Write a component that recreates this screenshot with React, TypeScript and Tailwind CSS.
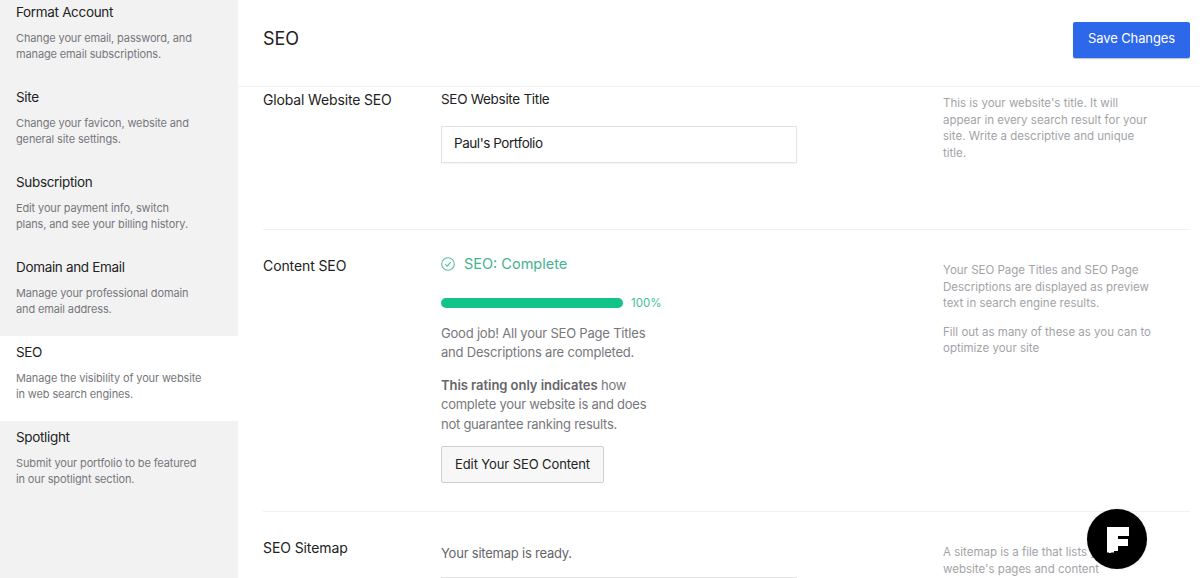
import React from 'react';

const navItems = [
  { title: 'Format Account', lines: ['Change your email, password, and', 'manage email subscriptions.'] },
  { title: 'Site', lines: ['Change your favicon, website and', 'general site settings.'] },
  { title: 'Subscription', lines: ['Edit your payment info, switch', 'plans, and see your billing history.'] },
  { title: 'Domain and Email', lines: ['Manage your professional domain', 'and email address.'] },
  { title: 'SEO', lines: ['Manage the visibility of your website', 'in web search engines.'], active: true },
  { title: 'Spotlight', lines: ['Submit your portfolio to be featured', 'in our spotlight section.'] },
];

const App: React.FC = () => {
  return (
    <div className="relative flex h-[578px] w-[1200px] overflow-hidden bg-white font-['Inter',sans-serif] text-[#222]">
      {/* Sidebar */}
      <aside className="w-[238px] shrink-0 bg-[#f2f2f3]">
        <div className="-mt-[4px]">
          {navItems.map((item) => (
            <div key={item.title} className={`h-[85px] pl-4 pt-[7px] ${item.active ? 'bg-white' : ''}`}>
              <h3 className="text-[13.5px] leading-[18px] tracking-[-0.33px] text-[#222]">{item.title}</h3>
              <p className="mt-[9px] text-[11px] leading-[16.4px] tracking-[-0.13px] text-[#77777c]">
                {item.lines.map((line) => (
                  <span key={line} className="block whitespace-nowrap">{line}</span>
                ))}
              </p>
            </div>
          ))}
        </div>
      </aside>

      {/* Main */}
      <main className="flex-1">
        <header className="flex h-[87px] items-start justify-between border-b border-[#f3f3f3] pl-[25px] pr-[10px]">
          <h1 className="mt-[27px] text-[18px] leading-6 text-[#222]">SEO</h1>
          <button className="mt-[22px] h-[36px] w-[117px] rounded-[2px] bg-[#2d67ea] pb-[2px] text-[13px] tracking-[-0.1px] text-white shadow-[0_1px_1px_rgba(0,0,0,0.25)]">
            Save Changes
          </button>
        </header>

        <div className="ml-[25px] mr-[10px]">
          {/* Global Website SEO */}
          <section className="flex h-[143px] border-b border-[#f0f0f0]">
            <h2 className="mt-[4px] w-[178px] text-[14px] leading-[18px] tracking-[-0.15px]">Global Website SEO</h2>
            <div className="w-[502px] pt-[3px]">
              <label className="block text-[13.5px] leading-[18px] tracking-[-0.3px]">SEO Website Title</label>
              <div className="mt-[18px] flex h-[37px] w-[356px] items-center border border-[#e3e3e3] pb-[2px] pl-3 text-[13.5px] tracking-[-0.45px] shadow-[0_1px_1px_rgba(0,0,0,0.04)]">
                Paul's Portfolio
              </div>
            </div>
            <p className="mt-[8px] w-[220px] text-[11.5px] leading-[16.6px] text-[#a3a3a7]">
              <span className="block whitespace-nowrap">This is your website's title. It will</span>
              <span className="block whitespace-nowrap">appear in every search result for your</span>
              <span className="block whitespace-nowrap">site. Write a descriptive and unique</span>
              <span className="block whitespace-nowrap">title.</span>
            </p>
          </section>

          {/* Content SEO */}
          <section className="flex h-[282px] border-b border-[#f0f0f0]">
            <h2 className="mt-[27px] w-[178px] text-[14px] leading-[18px] tracking-[-0.1px]">Content SEO</h2>
            <div className="w-[502px] pt-[25px]">
              <div className="flex items-center gap-[9px]">
                <svg width="14" height="14" viewBox="0 0 14 14" fill="none" stroke="#5cbf9b" strokeWidth="1.1">
                  <circle cx="7" cy="7" r="6.3" />
                  <path d="M4.2 7.2l2 2 3.6-4" />
                </svg>
                <span className="text-[14.5px] leading-[18px] text-[#45b48e]">SEO: Complete</span>
              </div>
              <div className="mt-[23px] flex items-center gap-2">
                <div className="h-[10px] w-[182px] rounded-full bg-[#12c488]" />
                <span className="text-[11.5px] leading-[14px] text-[#3fbf94]">100%</span>
              </div>
              <p className="mt-[14px] text-[13px] leading-[19.4px] tracking-[-0.2px] text-[#77777c]">
                <span className="block whitespace-nowrap">Good job! All your SEO Page Titles</span>
                <span className="block whitespace-nowrap">and Descriptions are completed.</span>
              </p>
              <p className="mt-[13px] text-[13px] leading-[19.4px] tracking-[-0.25px] text-[#77777c]">
                <span className="block whitespace-nowrap"><span className="font-semibold tracking-[-0.05px] text-[#66666a]">This rating only indicates</span> how</span>
                <span className="block whitespace-nowrap">complete your website is and does</span>
                <span className="block whitespace-nowrap">not guarantee ranking results.</span>
              </p>
              <button className="mt-[12px] h-[37px] w-[163px] rounded-[2px] border border-[#cfcfcf] bg-[#f7f7f7] text-[13px] tracking-[-0.1px] text-[#222]">
                Edit Your SEO Content
              </button>
            </div>
            <div className="mt-[32px] w-[220px] text-[11.5px] leading-[16.6px] text-[#a3a3a7]">
              <p>
                <span className="block whitespace-nowrap">Your SEO Page Titles and SEO Page</span>
                <span className="block whitespace-nowrap">Descriptions are displayed as preview</span>
                <span className="block whitespace-nowrap">text in search engine results.</span>
              </p>
              <p className="mt-[12px]">
                <span className="block whitespace-nowrap">Fill out as many of these as you can to</span>
                <span className="block whitespace-nowrap">optimize your site</span>
              </p>
            </div>
          </section>

          {/* SEO Sitemap */}
          <section className="flex h-[70px]">
            <h2 className="mt-[27px] w-[178px] text-[14px] leading-[18px] tracking-[-0.1px]">SEO Sitemap</h2>
            <div className="w-[502px] pt-[32px]">
              <p className="text-[13px] leading-[18px] tracking-[-0.22px] text-[#66666a]">Your sitemap is ready.</p>
              <div className="mt-[15px] h-[37px] w-[356px] border border-[#e3e3e3]" />
            </div>
            <p className="mt-[32px] w-[220px] text-[11.5px] leading-[16.6px] text-[#a3a3a7]">
              <span className="block whitespace-nowrap">A sitemap is a file that lists your</span>
              <span className="block whitespace-nowrap">website's pages and content</span>
            </p>
          </section>
        </div>
      </main>

      {/* Format badge */}
      <button className="absolute left-[1087px] top-[509px] flex h-[60px] w-[60px] items-center justify-center rounded-full bg-black shadow-[0_0_2px_rgba(0,0,0,0.2)]">
        <svg width="22" height="26" viewBox="0 0 22 26" fill="white" className="ml-[1px] mt-[1px]">
          <path d="M0 0H22V9H11V12H21V19H11V24H7V25.5H4V26H2V25.5H0Z" />
        </svg>
      </button>
    </div>
  );
};

export default App;
